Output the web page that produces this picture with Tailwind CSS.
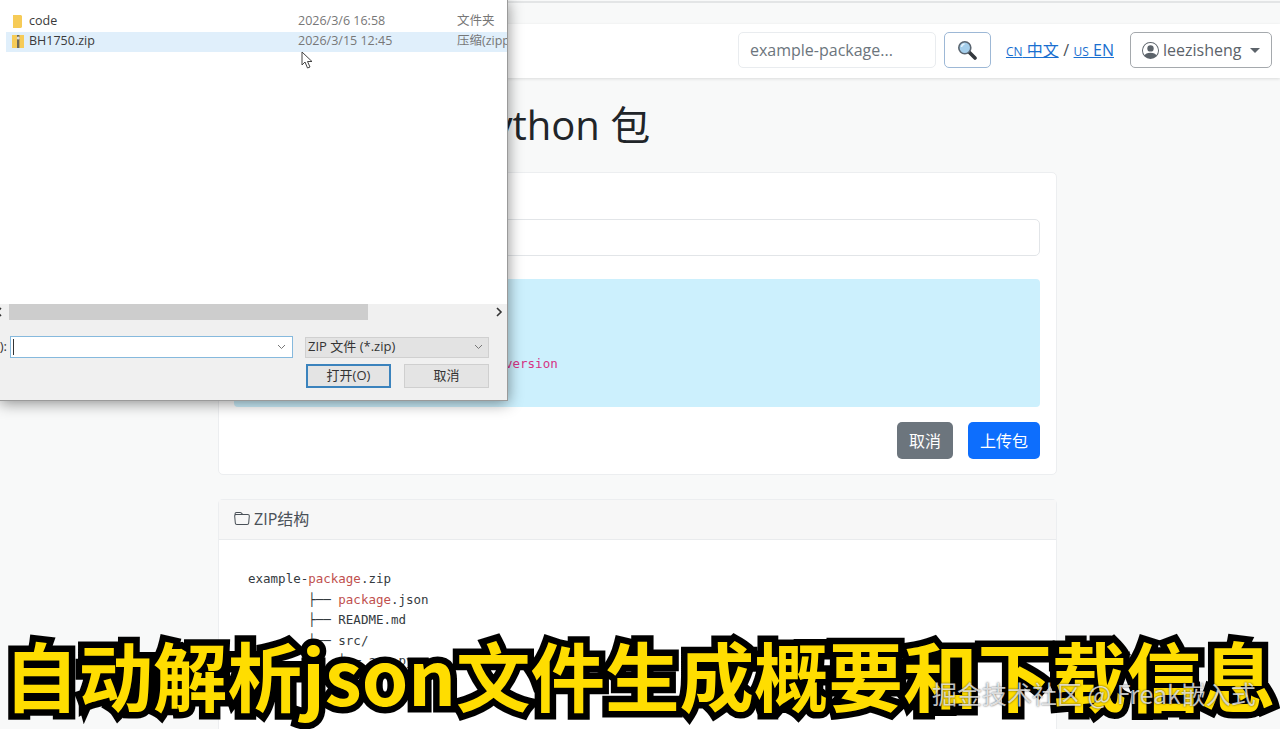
<!DOCTYPE html>
<html lang="zh-CN">
<head>
    <meta charset="UTF-8">
    <title>上传 Python 包</title>
    <script src="https://cdn.jsdelivr.net/npm/@tailwindcss/browser@4"></script>
</head>
<body class="relative h-[729px] overflow-hidden bg-[#f8f9f9] font-['Open_Sans','Noto_Sans_CJK_SC',sans-serif] text-[#212529]">

    <!-- page behind the dialog -->
    <div class="h-[24px] pt-[1px]"><div class="h-[2px] bg-[#e3e5e6]"></div></div>
    <nav class="flex h-[54px] items-center justify-end bg-white pb-[2px] pr-[8px] shadow-[0_1px_3px_rgba(0,0,0,0.12)]">
        <div class="flex h-[36px] w-[198px] items-center rounded-[5px] border border-[#e9ecef] bg-white pl-[11px] text-[16px] text-[#6c757d]">example-package...</div>
        <button class="ml-[8px] flex h-[36px] w-[47px] items-center justify-center rounded-[5px] border border-[#9db8d6] bg-white">
            <svg width="20" height="20" viewBox="0 0 20 20">
                <path d="M12 12l6 6" stroke="#33383d" stroke-width="3.6" stroke-linecap="round"/>
                <circle cx="7.800" cy="7.800" r="6" fill="#a5cfec" stroke="#5a6570" stroke-width="1.600"/>
                <path d="M4.500 7a3.500 3.500 0 0 1 3-3" stroke="#e6f3fc" stroke-width="1.400" fill="none"/>
            </svg>
        </button>
        <div class="ml-[15px] flex items-center text-[16px] text-[#495057]">
            <a class="text-[#1a6fd0] underline"><span class="text-[12px]">CN</span> 中文</a>
            <span class="mx-[4.5px]">/</span>
            <a class="text-[#1a6fd0] underline"><span class="text-[12px]">US</span> EN</a>
        </div>
        <button class="ml-[16px] flex h-[36px] w-[142px] items-center rounded-[5px] border border-[#a5a9ad] bg-white pl-[11px] text-[16px] text-[#5c636a]">
            <svg width="17" height="17" viewBox="0 0 16 16" fill="#5c636a">
                <path d="M11 6a3 3 0 1 1-6 0 3 3 0 0 1 6 0z"/>
                <path fill-rule="evenodd" d="M0 8a8 8 0 1 1 16 0A8 8 0 0 1 0 8zm8-7a7 7 0 0 0-5.468 11.37C3.242 11.226 4.805 10 8 10s4.757 1.225 5.468 2.37A7 7 0 0 0 8 1z"/>
            </svg>
            <span class="ml-[4px]">leezisheng</span>
            <span class="ml-[9px] h-0 w-0 border-x-[5px] border-t-[5px] border-x-transparent border-t-[#5c636a]"></span>
        </button>
    </nav>

    <main class="ml-[218px] w-[839px]">
        <h1 class="h-[94px] whitespace-nowrap pl-[160px] pt-[17px] text-[40px] leading-[60px]">上传 Python 包</h1>

        <section class="h-[303px] rounded-[5px] border border-[#eceef0] bg-white pl-[15px] pr-[16px] pt-[46px]">
            <div class="h-[37px] rounded-[5px] border border-[#e2e5e8] bg-white"></div>
            <div class="mt-[23px] h-[128px] rounded-[4px] bg-[#ccf0fd] pl-[271px] pt-[76px] font-['DejaVu_Sans_Mono',monospace] text-[12.5px] leading-[18px] text-[#d63384]">version</div>
            <div class="mt-[15px] flex justify-end gap-[15px] text-[16px] text-white">
                <button class="h-[37px] w-[56px] rounded-[5px] bg-[#6c757d]">取消</button>
                <button class="h-[37px] w-[72px] rounded-[5px] bg-[#0d6efd]">上传包</button>
            </div>
        </section>

        <section class="mt-[24px] h-[230px] rounded-t-[5px] border-x border-t border-[#eceef0] bg-white">
            <div class="flex h-[40px] items-center gap-[4px] border-b border-[#e9ebed] bg-[#f7f7f7] pb-[1px] pl-[15px] text-[16px] text-[#495057]">
                <svg width="16" height="16" viewBox="0 0 16 16" fill="#495057">
                    <path d="M.54 3.87.5 3a2 2 0 0 1 2-2h3.672a2 2 0 0 1 1.414.586l.828.828A2 2 0 0 0 9.828 3h3.982a2 2 0 0 1 1.992 2.181l-.637 7A2 2 0 0 1 13.174 14H2.826a2 2 0 0 1-1.991-1.819l-.637-7a1.99 1.99 0 0 1 .342-1.31zM2.19 4a1 1 0 0 0-.996 1.09l.637 7a1 1 0 0 0 .995.91h10.348a1 1 0 0 0 .995-.91l.637-7A1 1 0 0 0 13.81 4H2.19zm4.69-1.707A1 1 0 0 0 6.172 2H2.5a1 1 0 0 0-1 .981l.006.139C1.72 3.042 1.95 3 2.19 3h5.396l-.707-.707z"/>
                </svg>
                ZIP结构
            </div>
            <pre class="mt-[29px] pl-[29px] font-['DejaVu_Sans_Mono',monospace] text-[12.5px] leading-[20.5px] text-[#343a40]">example-<span class="text-[#c0504d]">package</span>.zip
        ├── <span class="text-[#c0504d]">package</span>.json
        ├── README.md
        ├── src/
        │   ├── app.py</pre>
        </section>
    </main>

    <!-- file picker window -->
    <div class="absolute left-0 top-0 flex h-[401px] w-[508px] flex-col border-b border-r border-[#9a9a9a] bg-white text-[13px] shadow-[0_2px_14px_rgba(0,0,0,0.45)]">
        <div class="h-[304px] pl-[6px] pt-[11px] text-[12.5px] text-[#3a3a3a]">
            <div class="flex h-[20px] items-center pl-[6px]">
                <svg class="shrink-0" width="11" height="14" viewBox="0 0 11 14"><path d="M1 1h8l1 1v11l-1 1H1z" fill="#f6cb57"/></svg>
                <span class="ml-[6px] w-[269px]">code</span>
                <span class="w-[159px] text-[#777]">2026/3/6 16:58</span>
                <span class="whitespace-nowrap text-[#777]">文件夹</span>
            </div>
            <div class="mt-[1px] flex h-[20px] items-center overflow-hidden bg-[#e0effb] pb-[1px] pl-[6px]">
                <svg class="shrink-0" width="12" height="15" viewBox="0 0 12 15"><path d="M0 1h12v13H0z" fill="#f6cb57"/><path d="M5 1h2.400v13H5z" fill="#6f6a58"/><circle cx="6.200" cy="4" r="1.500" fill="#ddd"/></svg>
                <span class="ml-[5px] w-[269px] shrink-0">BH1750.zip</span>
                <span class="w-[159px] shrink-0 text-[#777]">2026/3/15 12:45</span>
                <span class="whitespace-nowrap text-[#777]">压缩(zipped)</span>
            </div>
        </div>

        <div class="flex h-[16px] items-center justify-between bg-[#f0f0f0]">
            <div class="flex items-center">
                <span class="-ml-[5px] w-[14px] text-[#333]"><svg width="8" height="10" viewBox="0 0 8 10"><path d="M6 1 2 5l4 4" fill="none" stroke="#333" stroke-width="1.600"/></svg></span>
                <div class="h-[16px] w-[359px] bg-[#cdcdcd]"></div>
            </div>
            <svg class="mr-[4px]" width="8" height="10" viewBox="0 0 8 10"><path d="M2 1l4 4-4 4" fill="none" stroke="#333" stroke-width="1.600"/></svg>
        </div>

        <div class="flex-1 bg-[#f0f0f0] text-[#333]">
            <div class="mt-[16px] flex h-[22px] items-center">
                <div class="flex w-[10px] shrink-0 justify-end overflow-hidden whitespace-nowrap pr-[3px]">(N):</div>
                <div class="flex h-[22px] w-[283px] items-center justify-between border border-[#86b9dd] bg-white pl-[2px] pr-[6px]">
                    <span class="h-[16px] w-[1px] bg-[#333]"></span>
                    <svg width="9" height="6" viewBox="0 0 9 6"><path d="M1 1l3.500 3.500L8 1" fill="none" stroke="#777"/></svg>
                </div>
                <div class="ml-[12px] flex h-[21px] w-[184px] items-center justify-between border border-[#d0d0d0] bg-[#e3e3e3] pl-[2px] pr-[5px]">
                    ZIP 文件 (*.zip)
                    <svg width="9" height="6" viewBox="0 0 9 6"><path d="M1 1l3.500 3.500L8 1" fill="none" stroke="#777"/></svg>
                </div>
            </div>
            <div class="mt-[6px] flex gap-[13px] pl-[306px]">
                <button class="h-[24px] w-[85px] border-2 border-[#3b83bd] bg-[#e4e4e4]">打开(O)</button>
                <button class="h-[24px] w-[85px] border border-[#cfcfcf] bg-[#e4e4e4]">取消</button>
            </div>
        </div>
    </div>

    <!-- mouse pointer -->
    <svg class="absolute left-[301px] top-[51px]" width="14" height="18" viewBox="0 0 14 18">
        <path d="M1 1v13l3-3 2.500 6 2.500-1-2.500-5.500H11z" fill="#fff" stroke="#444" stroke-width="1"/>
    </svg>

    <!-- video caption -->
    <div class="absolute left-[4px] top-[624px] whitespace-nowrap font-['Noto_Sans_CJK_SC',sans-serif] text-[74.5px] font-bold leading-[100px] text-[#ffdd00] [-webkit-text-stroke:13px_#000] [paint-order:stroke_fill]">自动解析json文件生成概要和下载信息</div>

    <!-- watermark -->
    <div class="absolute left-[932px] top-[677px] whitespace-nowrap font-['Noto_Sans_CJK_SC',sans-serif] text-[25px] leading-[32px] text-white/75 [text-shadow:0_0_2px_rgba(0,0,0,0.7)]">掘金技术社区 @ Freak嵌入式</div>

</body>
</html>
